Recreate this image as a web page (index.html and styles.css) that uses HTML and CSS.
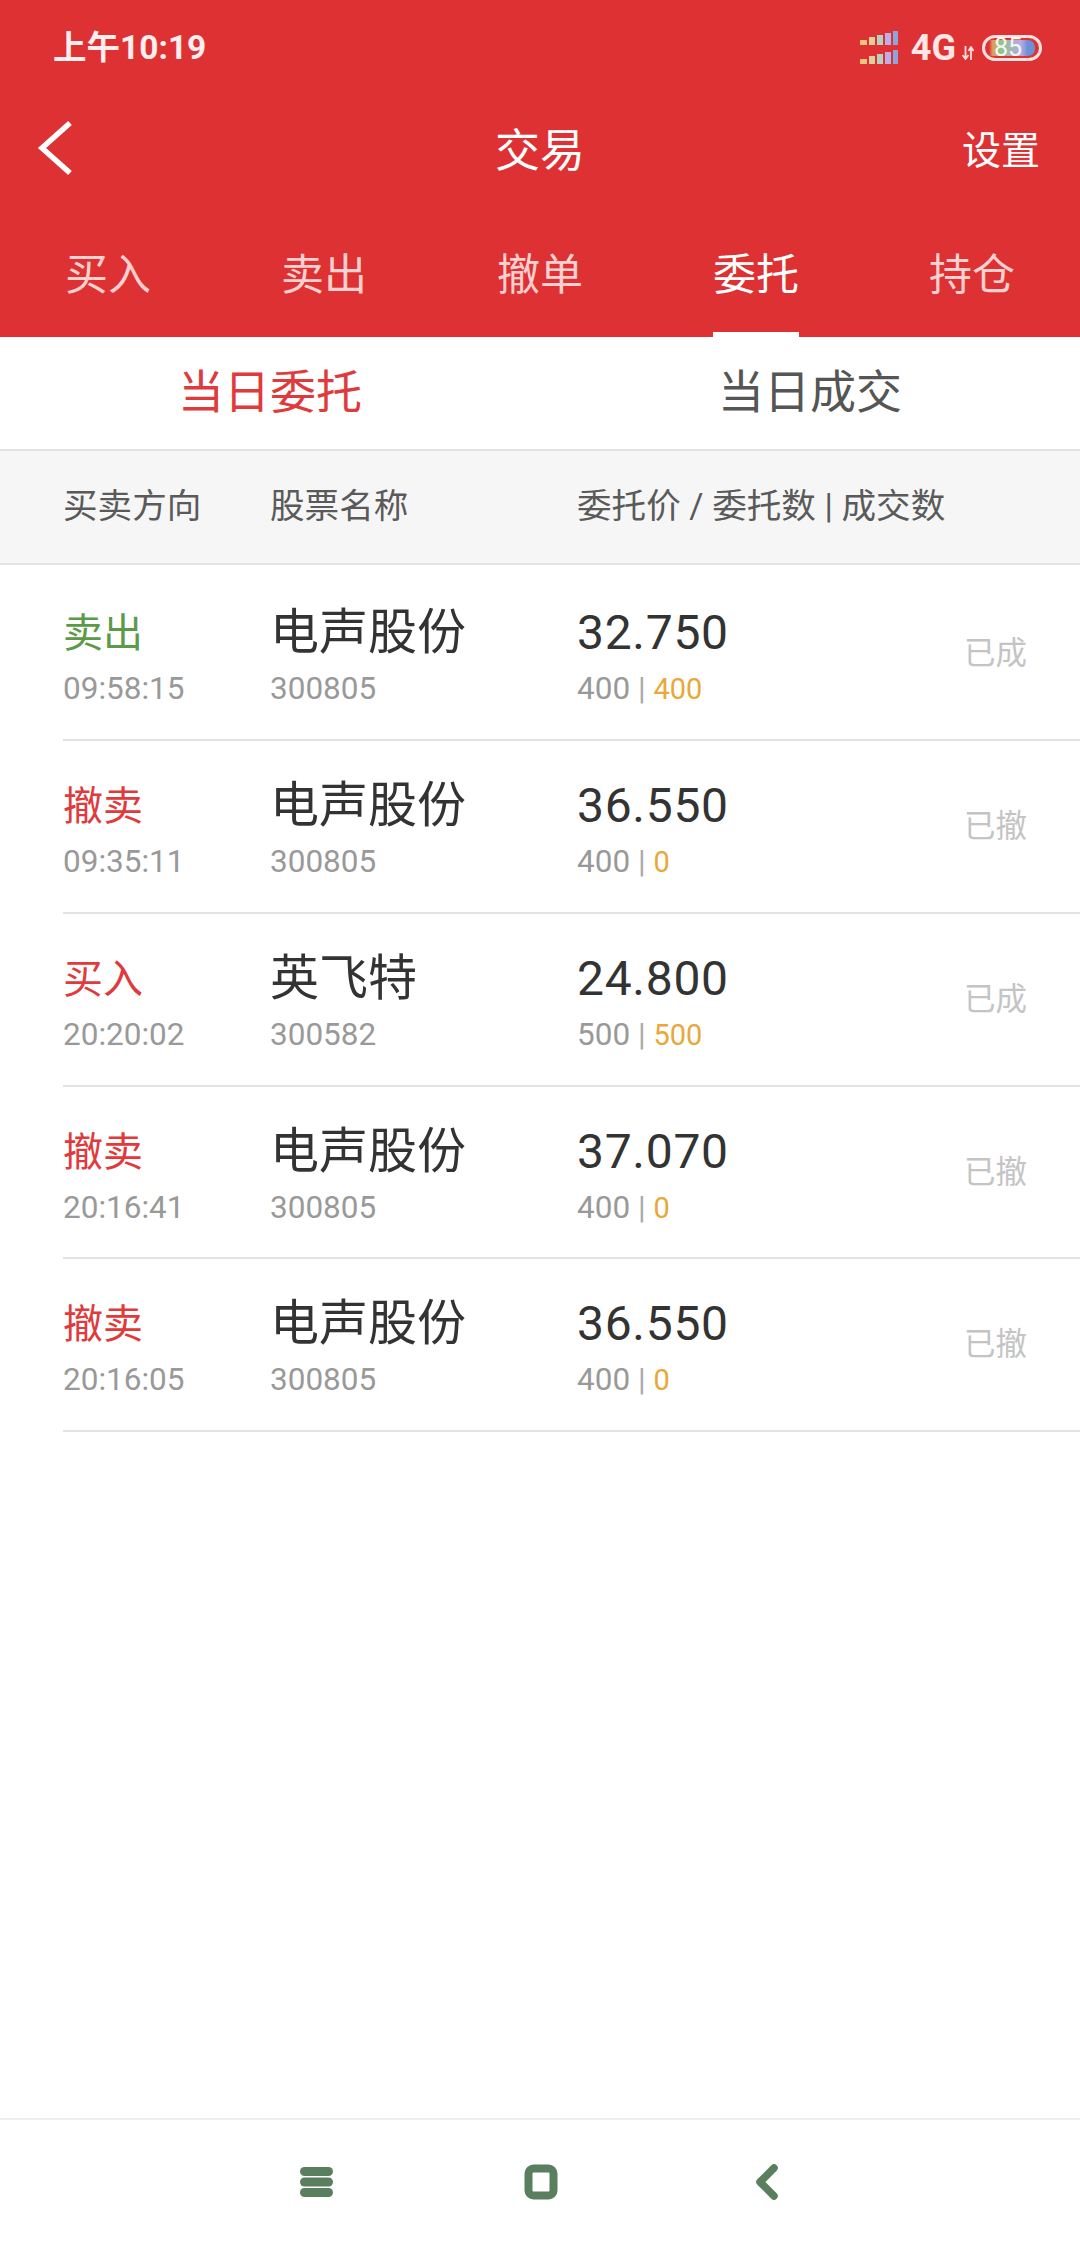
FILE: index.html
```html
<!DOCTYPE html>
<html lang="zh-CN">
<head>
    <meta charset="UTF-8">
    <title>交易</title>
    <link rel="stylesheet" href="styles.css">
</head>
<body>
    <div class="head">
        <div class="status">
            <span class="clock">上午10:19</span>
            <div class="status-right">
                <svg class="signal" width="40" height="34" viewBox="0 0 40 34">
                    <rect x="0" y="9" width="7" height="5" fill="#f5c27e"/>
                    <rect x="9" y="6" width="6" height="8" fill="#e3cf9a"/>
                    <rect x="17" y="4" width="6" height="10" fill="#b6d3c2"/>
                    <rect x="25" y="2" width="6" height="12" fill="#bcaee8"/>
                    <rect x="33" y="0" width="5" height="14" fill="#8fa3dc"/>
                    <rect x="0" y="28" width="7" height="5" fill="#f5c27e"/>
                    <rect x="9" y="25" width="6" height="8" fill="#e3cf9a"/>
                    <rect x="17" y="23" width="6" height="10" fill="#b6d3c2"/>
                    <rect x="25" y="21" width="6" height="12" fill="#bcaee8"/>
                    <rect x="33" y="19" width="5" height="14" fill="#8fa3dc"/>
                </svg>
                <span class="net">4G</span>
                <svg class="arrows" width="12" height="14" viewBox="0 0 12 14">
                    <path d="M3.5 0V12M0.5 9L3.5 13L6.500 9M9 14V2M6.500 5L9 1L11.500 5" fill="none" stroke="#ffdcdc" stroke-width="1.800"/>
                </svg>
                <div class="battery"><span class="battery-fill">85</span></div>
            </div>
        </div>
        <div class="title-bar">
            <div class="title-side">
                <svg class="back" width="36" height="56" viewBox="0 0 36 56">
                    <path d="M33 3L5 28L33 53" fill="none" stroke="#fff" stroke-width="5.500"/>
                </svg>
            </div>
            <span class="title">交易</span>
            <div class="title-side right"><span class="setting">设置</span></div>
        </div>
        <ul class="tabs">
            <li><span>买入</span></li>
            <li><span>卖出</span></li>
            <li><span>撤单</span></li>
            <li class="active"><span>委托</span></li>
            <li><span>持仓</span></li>
        </ul>
    </div>

    <div class="sub-tabs">
        <div class="sub-tab on">当日委托</div>
        <div class="sub-tab">当日成交</div>
    </div>

    <div class="table-head">
        <span>买卖方向</span>
        <span>股票名称</span>
        <span>委托价 / 委托数 | 成交数</span>
    </div>

    <div class="rows">
        <div class="row first">
            <div><div class="side green">卖出</div><div class="small">09:58:15</div></div>
            <div><div class="name">电声股份</div><div class="small">300805</div></div>
            <div><div class="price">32.750</div><div class="small">400 <i>|</i> <b>400</b></div></div>
            <div class="state">已成</div>
        </div>
        <div class="row">
            <div><div class="side red">撤卖</div><div class="small">09:35:11</div></div>
            <div><div class="name">电声股份</div><div class="small">300805</div></div>
            <div><div class="price">36.550</div><div class="small">400 <i>|</i> <b>0</b></div></div>
            <div class="state">已撤</div>
        </div>
        <div class="row">
            <div><div class="side red">买入</div><div class="small">20:20:02</div></div>
            <div><div class="name">英飞特</div><div class="small">300582</div></div>
            <div><div class="price">24.800</div><div class="small">500 <i>|</i> <b>500</b></div></div>
            <div class="state">已成</div>
        </div>
        <div class="row">
            <div><div class="side red">撤卖</div><div class="small">20:16:41</div></div>
            <div><div class="name">电声股份</div><div class="small">300805</div></div>
            <div><div class="price">37.070</div><div class="small">400 <i>|</i> <b>0</b></div></div>
            <div class="state">已撤</div>
        </div>
        <div class="row">
            <div><div class="side red">撤卖</div><div class="small">20:16:05</div></div>
            <div><div class="name">电声股份</div><div class="small">300805</div></div>
            <div><div class="price">36.550</div><div class="small">400 <i>|</i> <b>0</b></div></div>
            <div class="state">已撤</div>
        </div>
    </div>

    <div class="nav">
        <svg class="nav-menu" width="34" height="30" viewBox="0 0 34 30">
            <rect x="0" y="0" width="33" height="9" rx="4.500" fill="#5a7f5e"/>
            <rect x="0" y="10.500" width="33" height="9" rx="4.500" fill="#5a7f5e"/>
            <rect x="0" y="21" width="33" height="9" rx="4.500" fill="#5a7f5e"/>
        </svg>
        <svg class="nav-home" width="34" height="36" viewBox="0 0 34 36">
            <rect x="4.500" y="4.500" width="25" height="27" rx="5" fill="none" stroke="#5a7f5e" stroke-width="8"/>
        </svg>
        <svg class="nav-back" width="24" height="36" viewBox="0 0 24 36">
            <path d="M19 4L5 18L19 32" fill="none" stroke="#5a7f5e" stroke-width="7.500" stroke-linecap="round" stroke-linejoin="round"/>
        </svg>
    </div>
</body>
</html>
```

FILE: styles.css
```css
*{margin: 0;padding: 0;box-sizing: border-box;}
ul,li{list-style: none;}
i{font-style: normal;}
b{font-weight: 400;}
body{width: 1080px;height: 2248px;display: flex;flex-direction: column;background: #fff;font-family: Roboto, "Noto Sans CJK SC", sans-serif;color: #333;overflow: hidden;}

/* 顶部红色区域 */
.head{background: #de3133;height: 337px;color: #fff;}
.status{height: 96px;padding: 0 38px 0 53px;display: flex;align-items: center;justify-content: space-between;}
.clock{font-size: 33.500px;font-weight: 700;color: #ffeeee;line-height: 44px;margin-top: -1px;}
.status-right{display: flex;align-items: center;margin-top: 0;}
.signal{margin-right: 11px;}
.net{font-size: 36px;font-weight: 700;color: #ffe6e6;line-height: 40px;}
.arrows{margin: 10px 8px 0 6px;}
.battery{width: 60px;height: 26px;border: 3px solid #ffe0e0;border-radius: 13px;padding: 2px 4px;display: flex;}
.battery-fill{flex: 1;display: flex;align-items: center;justify-content: center;padding-right: 8px;font-size: 25px;line-height: 18px;color: #f0fbf2;border-radius: 0 7px 7px 0;background: linear-gradient(to right, transparent 0, #e39a5c 8%, #93c38b 25%, #b8a8e8 70%, #6d8fd4 84%);}

.title-bar{height: 108px;padding: 0 40px;display: flex;align-items: center;}
.title-side{flex: 1;display: flex;}
.title-side.right{justify-content: flex-end;}
.back{margin-top: -4px;margin-left: -3px;}
.title{font-size: 45px;line-height: 56px;margin-top: 4px;}
.setting{font-size: 39px;line-height: 50px;margin-top: 2px;}

.tabs{height: 133px;display: flex;}
.tabs li{width: 216px;text-align: center;font-size: 43px;color: #ffd0d0;}
.tabs li span{display: inline-block;height: 133px;line-height: 142px;}
.tabs li.active{color: #fff;}
.tabs li.active span{border-bottom: 5px solid #fff;}

/* 当日委托 / 当日成交 */
.sub-tabs{height: 112px;display: flex;}
.sub-tab{flex: 1;text-align: center;font-size: 46px;line-height: 110px;color: #555;}
.sub-tab.on{color: #e03a3c;}

.table-head{height: 116px;padding: 0 0 8px 63px;display: grid;grid-template-columns: 207px 307px 1fr;align-items: center;background: #f6f6f6;border-top: 2px solid #e4e4e4;border-bottom: 2px solid #e4e4e4;font-size: 34.600px;color: #5a5a5a;}

/* 委托列表 */
.row{margin-left: 63px;padding: 37px 53px 0 0;height: 172.750px;display: grid;grid-template-columns: 207px 307px 1fr auto;align-content: start;border-bottom: 2px solid #e2e2e2;}
.row.first{padding-top: 40px;height: 176px;}
.side{font-size: 40px;line-height: 58px;height: 56px;}
.green{color: #5b9a48;}
.red{color: #e03a3c;}
.name{font-size: 49px;line-height: 56px;color: #333;}
.price{font-size: 48px;line-height: 56px;color: #333;letter-spacing: 0.7px;}
.small{font-size: 31.500px;line-height: 56px;color: #999;}
.small i{color: #aaa;}
.small b{font-size: 29px;color: #e8a83a;}
.state{font-size: 31.500px;line-height: 40px;margin-top: 29px;color: #c4c4c4;}

/* 底部导航 */
.nav{margin-top: auto;height: 130px;padding: 0 0 4px 300px;border-top: 2px solid #eee;display: flex;align-items: center;}
.nav-home{margin-left: 190px;}
.nav-back{margin-left: 197px;}
```
